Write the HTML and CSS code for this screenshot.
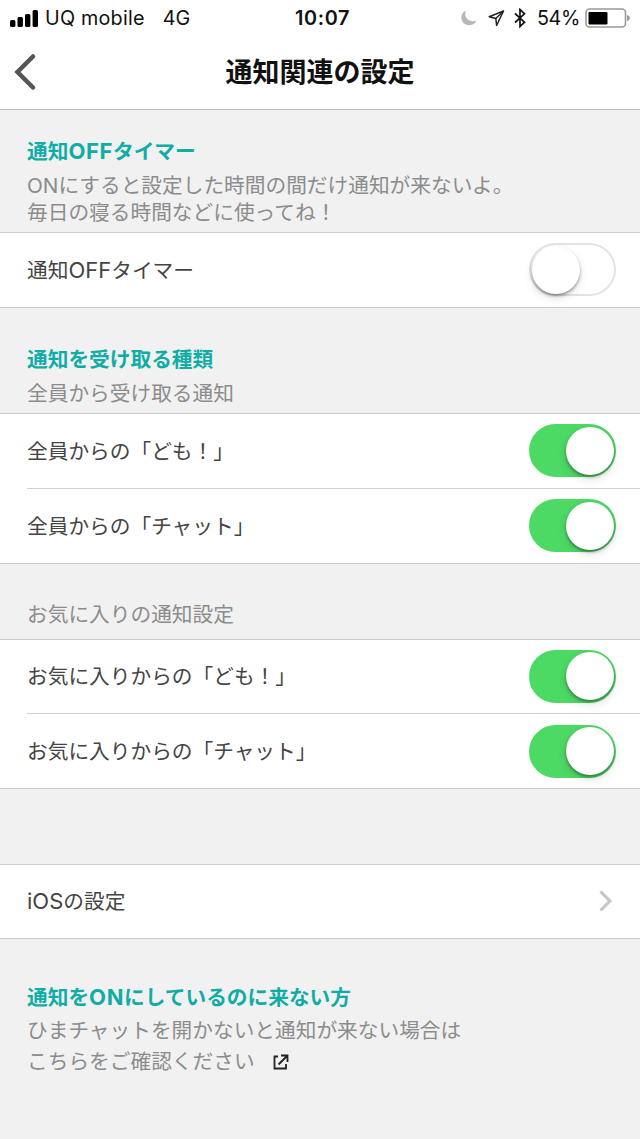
FILE: index.html
```
<!DOCTYPE html>
<html lang="ja">
<head>
<meta charset="utf-8" />
<title>通知関連の設定</title>
<meta name="viewport" content="width=640">
<link rel="stylesheet" href="styles.css">
</head>
<body>
<div class="doc">

    <div class="status">
        <div class="status-left">
            <svg class="signal" width="28" height="18" viewBox="0 0 28 18"><rect x="0" y="11" width="5.4" height="7" rx="1.5"/><rect x="7.5" y="8" width="5.4" height="10" rx="1.5"/><rect x="15" y="5" width="5.4" height="13" rx="1.5"/><rect x="22.6" y="1" width="5.4" height="17" rx="1.5"/></svg>
            <span class="carrier">UQ mobile</span>
            <span class="network">4G</span>
        </div>
        <div class="time">10:07</div>
        <div class="status-right">
            <svg class="moon" width="16" height="16" viewBox="0 0 16 16"><path d="M5 .5C1.500 2-.2 5.200.5 9c.8 4 4.300 6.500 8.300 6.200 3-.2 5.300-1.700 6.700-4.400C10.500 12.500 4.500 9.500 4.300 4.500 4.200 3 4.400 1.700 5 .5z"/></svg>
            <svg class="arrow" width="17" height="17" viewBox="0 0 17 17"><path d="M15.500 1L1.200 6.800l6.600 1.700.8 7z"/><path d="M15.500 1L7.800 8.500"/></svg>
            <svg class="bluetooth" width="12" height="20" viewBox="0 0 12 20"><path d="M1 5.500l9.500 8.700L6 18.500v-17l4.500 4.300L1 14.500"/></svg>
            <span class="percent">54%</span>
            <svg class="battery" width="46" height="20" viewBox="0 0 46 20"><rect class="case" x="1" y="1" width="39.500" height="18" rx="3.500"/><rect x="3.500" y="4" width="19" height="12.500" rx="1"/><path class="cap" d="M42 7c1.800.3 2.800 1.500 2.800 3s-1 2.700-2.800 3z"/></svg>
        </div>
    </div>

    <div class="navbar">
        <svg class="back" width="24" height="38" viewBox="0 0 24 38"><path d="M20 3.500L4.500 19 20 34.500"/></svg>
        <h1>通知関連の設定</h1>
    </div>

    <!-- 通知OFFタイマー -->
    <div class="head head-timer">
        <h2>通知<span class="en">OFF</span>タイマー</h2>
        <p>ONにすると設定した時間の間だけ通知が来ないよ。<br>毎日の寝る時間などに使ってね！</p>
    </div>
    <ul class="list">
        <li><span>通知<span class="en">OFF</span>タイマー</span><i class="switch"></i></li>
    </ul>

    <!-- 通知を受け取る種類 -->
    <div class="head head-kind">
        <h2>通知を受け取る種類</h2>
        <p>全員から受け取る通知</p>
    </div>
    <ul class="list">
        <li><span>全員からの「ども！」</span><i class="switch on"></i></li>
        <li><span>全員からの「チャット」</span><i class="switch on"></i></li>
    </ul>

    <div class="head head-fav">
        <p>お気に入りの通知設定</p>
    </div>
    <ul class="list">
        <li><span>お気に入りからの「ども！」</span><i class="switch on"></i></li>
        <li><span>お気に入りからの「チャット」</span><i class="switch on"></i></li>
    </ul>

    <div class="head head-empty"></div>
    <ul class="list">
        <li><span><span class="en">iOS</span>の設定</span><svg class="next" width="16" height="24" viewBox="0 0 16 24"><path d="M2.500 2.500L12 12l-9.500 9.500"/></svg></li>
    </ul>

    <div class="head head-help">
        <h2>通知を<span class="en">ON</span>にしているのに来ない方</h2>
        <p>ひまチャットを開かないと通知が来ない場合は<br>こちらをご確認ください<svg class="link" width="16" height="16" viewBox="0 0 16 16"><path d="M5 2.500H1.500v12h11.500V10M8 1.500h6.500V8M14 2L5.500 10.500"/></svg></p>
    </div>
</div>
</body>
</html>
```
FILE: styles.css
```
body,h1,h2,p,ul{margin:0;padding:0;}
body{background: #f1f1f1;font-family: Inter,"Noto Sans CJK JP",sans-serif;font-size: 20.7px;color: #444;text-spacing-trim: space-all;}
.doc{width: 640px;height: 1139px;overflow: hidden;}
svg{display: block;flex: none;}

.status{display: grid;grid-template-columns: 1fr auto 1fr;align-items: center;height: 36px;padding: 0 9px 0 10px;background: #fff;color: #111;font-size: 19.8px;line-height: 36px;white-space: nowrap;}
.status-left,.status-right{display: flex;align-items: center;}
.status-right{justify-content: flex-end;}
.carrier{margin-left: 7px;letter-spacing: .2px;}
.network{margin-left: 18px;}
.time{margin-left: 4px;font-weight: 600;letter-spacing: .6px;}
.moon{margin-right: 11px;fill: #b8b8b8;}
.arrow{margin-right: 9px;fill: none;stroke: #222;stroke-width: 1.5;stroke-linejoin: round;}
.bluetooth{margin-right: 11px;fill: none;stroke: #111;stroke-width: 1.7;}
.percent{margin-right: 5px;letter-spacing: -.4px;}
.battery .case{fill: none;stroke: #999;stroke-width: 1.6;}
.battery .cap{fill: #999;}

.navbar{display: grid;grid-template-columns: 50px 1fr 50px;align-items: center;height: 73px;background: #fff;border-bottom: 1px solid #bdbdbd;}
.navbar h1{font-size: 27px;line-height: 72px;font-weight: 700;color: #111;text-align: center;}
.back{margin: 0 0 2px 13px;fill: none;stroke: #555;stroke-width: 4.5;stroke-linecap: round;}

.head{box-sizing: border-box;padding: 0 27px;color: #8c8c8c;}
.head h2{font-size: 20.7px;line-height: 34px;font-weight: 700;color: #0fada6;}
.head p{line-height: 27px;}
.en{font-size: 22px;line-height: 1;}
h2 .en{letter-spacing: .6px;}
.head-timer{height: 122px;padding-top: 25px;}
.head-timer p,.head-kind p{padding-top: 3px;}
.head-kind{height: 105.5px;padding-top: 35px;}
.head-fav{height: 75px;padding-top: 37px;}
.head-empty{height: 74.5px;}
.head-help{padding-top: 42px;}
.head-help p{line-height: 31px;}
.link{display: inline-block;margin-left: 18px;vertical-align: -1px;fill: none;stroke: #222;stroke-width: 1.8;}

.list{list-style: none;padding-left: 27px;background: #fff;border-top: 1px solid #ccc;border-bottom: 1px solid #ccc;}
.list li{display: flex;justify-content: space-between;align-items: center;height: 73.5px;padding-right: 24px;}
.list li > span{padding-bottom: 2px;}
.list li + li{height: 74px;border-top: 1px solid #d2d2d2;}
.switch{box-sizing: border-box;width: 87px;height: 53px;padding: 2.5px;border-radius: 27px;background: #fff;box-shadow: inset 0 0 0 2px #e3e3e3;}
.switch:before{content: '';display: block;width: 48px;height: 48px;border-radius: 50%;background: #fff;box-shadow: 0 2px 3px rgba(0,0,0,.35),0 4px 10px rgba(0,0,0,.12);}
.switch.on{background: #4cd964;box-shadow: none;}
.switch.on:before{margin-left: 34px;}
.next{margin-right: 2px;fill: none;stroke: #c4c4c4;stroke-width: 3;}
```
